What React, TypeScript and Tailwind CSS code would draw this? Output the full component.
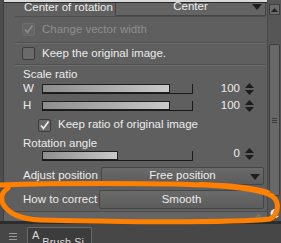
import React from 'react'

const font = { fontFamily: '"Liberation Sans", Arial, sans-serif' }

function Check({ checked, disabled }: { checked?: boolean; disabled?: boolean }) {
  return (
    <div
      className={
        'flex h-[13px] w-[13px] items-center justify-center rounded-[2px] border ' +
        (disabled ? 'border-[#6c6c6c] bg-[#656565]' : 'border-[#3c3c3c] bg-[#6a6a6a]')
      }
    >
      {checked && (
        <svg width="11" height="11" viewBox="0 0 11 11">
          <path
            d="M2 5.5 L4.5 8.5 L9.5 1.5"
            fill="none"
            stroke={disabled ? '#8c8c8c' : '#f2f2f2'}
            strokeWidth="1.6"
          />
        </svg>
      )}
    </div>
  )
}

function Spinner() {
  return (
    <div className="flex flex-col items-center gap-[2px]">
      <svg width="9" height="5" viewBox="0 0 9 5">
        <path d="M4.5 0 L9 5 L0 5 Z" fill="#1c1c1c" />
      </svg>
      <svg width="9" height="5" viewBox="0 0 9 5">
        <path d="M0 0 L9 0 L4.5 5 Z" fill="#1c1c1c" />
      </svg>
    </div>
  )
}

function Slider({ fill }: { fill: number }) {
  return (
    <div className="relative h-[10px] w-[151px] border-b border-r border-[#1a1a1a]">
      <div
        className="h-[9px] border border-[#1e1e1e] bg-gradient-to-r from-[#8e8e8e] to-[#c9c9c9]"
        style={{ width: fill }}
      />
    </div>
  )
}

function Arrow() {
  return (
    <svg width="10" height="6" viewBox="0 0 10 6">
      <path d="M0 0 L10 0 L5 6 Z" fill="#1e1e1e" />
    </svg>
  )
}

export default function App() {
  return (
    <div className="relative h-[243px] w-[281px] overflow-hidden whitespace-nowrap bg-[#5f5f5f] text-[11.5px] text-[#ececec]" style={font}>
      <div className="flex h-[221px]">
        <div className="w-[4px] bg-[#4e4e4e] border-r border-[#3e3e3e]" />
        <div className="flex w-[263px] flex-col">
          <div className="h-[3px] bg-[#d9d9d9] border-b border-[#2a2a2a]" />
          {/* Center of rotation */}
          <div className="flex h-[13px] items-center">
            <span className="ml-[20px] w-[91px] shrink-0 leading-none -mt-[4px]">Center of rotation</span>
            <div className="relative flex h-[13px] w-[151px] items-center justify-center border-x border-b border-[#454545] bg-[#646464]">
              <span className="-mt-[4px] leading-none">Center</span>
              <div className="absolute right-[3px] top-[1px]"><Arrow /></div>
            </div>
          </div>
          <div className="ml-[11px] h-px w-[250px] bg-[#4f4f4f]" />
          {/* Change vector width */}
          <div className="flex h-[25px] items-center gap-[7px] pl-[18px]">
            <Check checked disabled />
            <span className="text-[#8e8e8e]">Change vector width</span>
          </div>
          <div className="ml-[11px] h-px w-[250px] bg-[#505050] shadow-[0_1px_0_#6c6c6c]" />
          {/* Keep original */}
          <div className="flex h-[21px] items-center gap-[7px] pl-[18px]">
            <Check />
            <span>Keep the original image.</span>
          </div>
          <div className="ml-[11px] h-px w-[250px] bg-[#505050] shadow-[0_1px_0_#6c6c6c]" />
          {/* Scale ratio */}
          <div className="flex h-[15px] items-end pl-[19px]">
            <span className="leading-none">Scale ratio</span>
          </div>
          <div className="flex h-[17px] items-center">
            <span className="w-[38px] shrink-0 pl-[19px]">W</span>
            <Slider fill={128} />
            <span className="ml-auto mr-[5px]">100</span>
            <div className="mr-[13px]"><Spinner /></div>
          </div>
          <div className="flex h-[17px] items-center">
            <span className="w-[38px] shrink-0 pl-[19px]">H</span>
            <Slider fill={128} />
            <span className="ml-auto mr-[5px]">100</span>
            <div className="mr-[13px]"><Spinner /></div>
          </div>
          {/* Keep ratio */}
          <div className="flex h-[22px] items-center gap-[7px] pl-[34px]">
            <Check checked />
            <span>Keep ratio of original image</span>
          </div>
          {/* Rotation angle */}
          <div className="flex h-[13px] items-end pl-[19px]">
            <span className="leading-none">Rotation angle</span>
          </div>
          <div className="flex h-[14px] items-center">
            <div className="ml-[38px]"><Slider fill={76} /></div>
            <span className="ml-auto mr-[5px] -mt-[4px]">0</span>
            <div className="mr-[13px] -mt-[4px]"><Spinner /></div>
          </div>
          {/* Adjust position */}
          <div className="mt-[4px] flex h-[18px] items-center">
            <span className="w-[97px] shrink-0 pl-[19px]">Adjust position</span>
            <div className="relative flex h-[18px] w-[163px] items-center justify-center rounded-[2px] border border-[#464646] bg-gradient-to-b from-[#6a6a6a] to-[#5c5c5c]">
              <span>Free position</span>
              <div className="absolute right-[3px] top-[6px]"><Arrow /></div>
            </div>
          </div>
          {/* How to correct */}
          <div className="mt-[5px] flex h-[19px] items-center">
            <span className="w-[95px] shrink-0 pl-[19px]">How to correct</span>
            <div className="flex h-[19px] w-[165px] items-center justify-center rounded-[2px] border border-[#464646] bg-gradient-to-b from-[#6a6a6a] to-[#5c5c5c]">
              <span>Smooth</span>
            </div>
          </div>
          <div className="mt-[2px] h-px bg-[#4c4c4c]" />
          <div className="flex flex-1 items-center justify-end bg-[#646464] pr-[2px]">
            <svg width="12" height="9" viewBox="0 0 12 9">
              <path d="M1 8 L6 3 M4 3 L7 3 L7 6 M8 8 L11 5" stroke="#7c7c7c" strokeWidth="1.2" fill="none" />
            </svg>
          </div>
        </div>
        {/* Scrollbar */}
        <div className="flex w-[14px] flex-col bg-[#565656] border-l border-[#4a4a4a]">
          <div className="h-[4px]" />
          <div className="mx-auto flex h-[11px] w-[11px] items-center justify-center border border-[#3e3e3e] bg-[#6a6a6a]">
            <svg width="7" height="4" viewBox="0 0 7 4"><path d="M3.5 0 L7 4 L0 4 Z" fill="#222" /></svg>
          </div>
          <div className="h-[29px]" />
          <div className="mx-auto flex h-[152px] w-[11px] items-center justify-center rounded-[2px] border border-[#3e3e3e] bg-[#686868]">
            <div className="flex flex-col gap-[1px]">
              <div className="h-px w-[5px] bg-[#3a3a3a]" />
              <div className="h-px w-[5px] bg-[#3a3a3a]" />
              <div className="h-px w-[5px] bg-[#3a3a3a]" />
            </div>
          </div>
          <div className="mt-auto mb-[2px] flex justify-center">
            <svg width="12" height="11" viewBox="0 0 12 11">
              <circle cx="6" cy="5.5" r="4.5" fill="#e8e8e8" />
              <circle cx="8" cy="4.5" r="3.5" fill="#5e5e5e" />
            </svg>
          </div>
        </div>
      </div>
      <div className="h-[3px] bg-[#2c2c2c]" />
      {/* bottom tab bar */}
      <div className="flex h-[19px] items-end bg-[#474747] pl-[9px]">
        <div className="mb-[3px] flex flex-col gap-[2px]">
          <div className="h-px w-[8px] bg-[#9a9a9a]" />
          <div className="h-px w-[8px] bg-[#9a9a9a]" />
          <div className="h-px w-[8px] bg-[#9a9a9a]" />
        </div>
        <div className="ml-[10px] flex h-[16px] w-[65px] items-start gap-[3px] overflow-hidden rounded-t-[2px] border border-b-0 border-[#6a6a6a] bg-[#3c3c3c] pl-[4px] text-[11px]">
          <span className="leading-[14px] text-[#d8d8d8]">A</span>
          <span className="mt-[9px] leading-none text-[#d8d8d8]">Brush Si</span>
        </div>
      </div>
      {/* orange annotation */}
      <svg className="pointer-events-none absolute left-0 top-0" width="281" height="243" viewBox="0 0 281 243">
        <path
          d="M0 185 C60 183 150 183 205 185 C230 186 262 190 272 196 C280 202 279 214 270 219 C230 223 120 222 40 220 C18 219 8 213 3 204 C0 197 2 192 8 188"
          fill="none"
          stroke="#ff7f00"
          strokeWidth="5"
          strokeLinecap="round"
        />
        <path d="M200 184 C225 185 250 186 268 192" fill="none" stroke="#ff7f00" strokeWidth="4" strokeLinecap="round" />
      </svg>
    </div>
  )
}
